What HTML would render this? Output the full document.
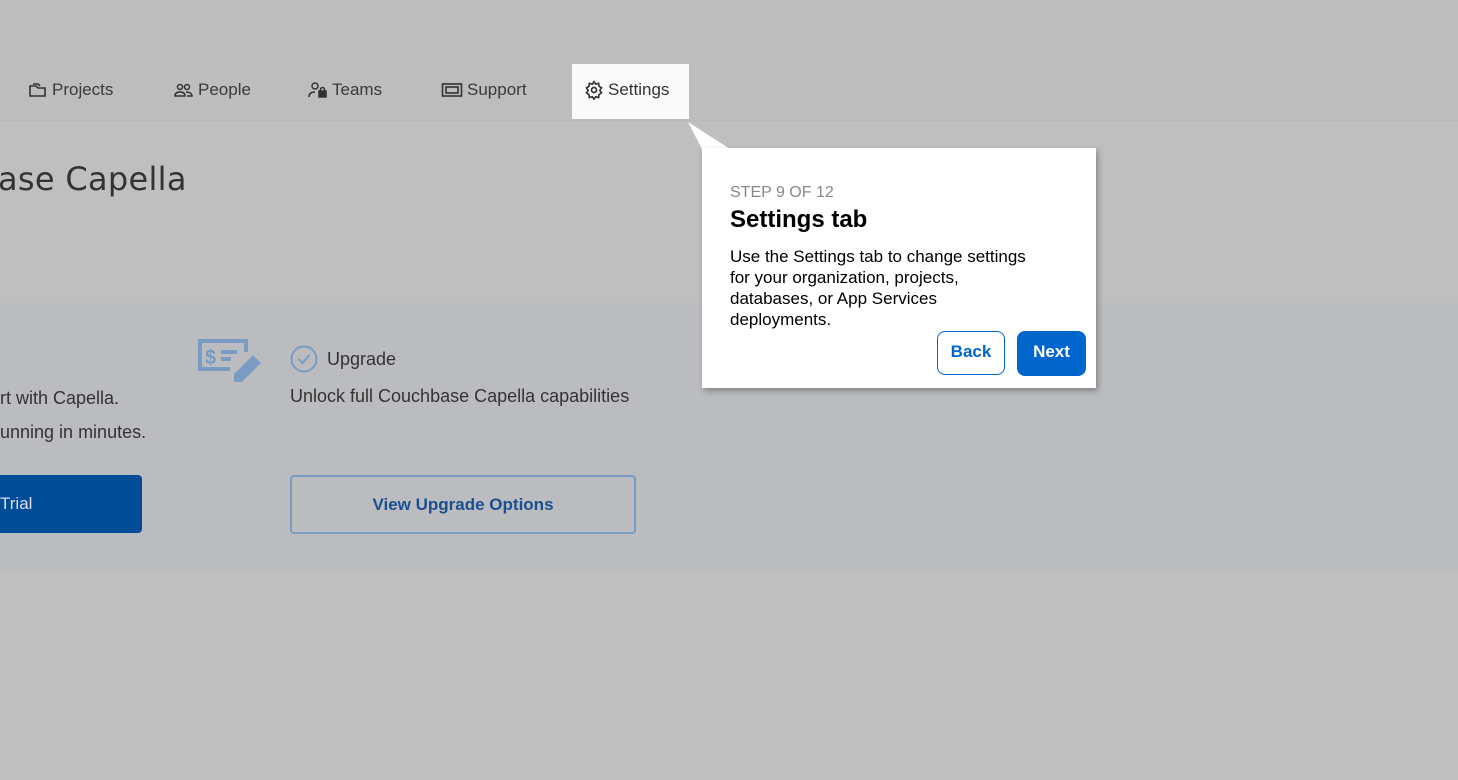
<!DOCTYPE html>
<html><head><style>
body{margin:0;width:1458px;height:780px;overflow:hidden;background:#bfbfbf;font-family:"Liberation Sans",sans-serif;position:relative}
.a{position:absolute}
.nav{top:0;left:0;width:1458px;height:120px;background:#bdbdbd;border-bottom:1px solid #b8b8b8}
.ni{top:80px;font-size:17px;color:#3a3a3a;display:flex;align-items:center;gap:4px}
.band{top:303px;left:0;width:1458px;height:267px;background:#babcbf}
.tip{left:702px;top:148px;width:394px;height:240px;background:#fff;box-shadow:2px 3px 6px rgba(0,0,0,.3)}
</style></head><body>
<div class="a nav"></div>
<div class="a" style="left:572px;top:64px;width:117px;height:55px;background:#fafafa"></div>
<div class="a ni" style="left:28px"><svg width="20" height="18" viewBox="0 0 20 18" fill="none" stroke="#333" stroke-width="1.6"><path d="M2 5h6l2 2h7v8H2z"/><path d="M5 3h5l2 2"/></svg>Projects</div>
<div class="a ni" style="left:174px"><svg width="20" height="16" viewBox="0 0 20 16" fill="none" stroke="#333" stroke-width="1.5"><circle cx="6" cy="5" r="2.5"/><circle cx="13" cy="5" r="2.5"/><path d="M1 14c0-3 2-4 5-4s5 1 5 4zM12 10c3 0 6 1 6 4h-5"/></svg>People</div>
<div class="a ni" style="left:308px"><svg width="20" height="18" viewBox="0 0 20 18" fill="none" stroke="#333" stroke-width="1.5"><circle cx="7" cy="5" r="3"/><path d="M1 16c0-4 3-5 6-5"/><rect x="11" y="10" width="7" height="6" fill="#333"/><path d="M12.5 10V8.5a2 2 0 0 1 4 0V10"/></svg>Teams</div>
<div class="a ni" style="left:441px"><svg width="22" height="16" viewBox="0 0 22 16" fill="none" stroke="#333" stroke-width="1.6"><rect x="1.5" y="2" width="19" height="12"/><rect x="5" y="5" width="12" height="6"/></svg>Support</div>
<div class="a ni" style="left:584px;color:#333"><svg width="20" height="20" viewBox="0 0 24 24" fill="none" stroke="#333" stroke-width="2"><circle cx="12" cy="12" r="3"/><path d="M12 2l2 3 3.5-1 .5 3.5 3 2-2 3 2 3-3 2-.5 3.5-3.5-1-2 3-2-3-3.5 1-.5-3.5-3-2 2-3-2-3 3-2 .5-3.5 3.5 1z"/></svg>Settings</div>
<div class="a" style="left:-2px;top:160px;font-size:32px;color:#333;font-family:'DejaVu Sans',sans-serif;letter-spacing:0.3px">ase Capella</div>
<div class="a band"></div>
<svg class="a" style="left:196px;top:337px" width="68" height="46" viewBox="0 0 68 46" fill="none" stroke="#7a9cc2" stroke-width="4"><path d="M50 15V4H4v28h30"/><text x="9" y="27" font-size="20" font-weight="bold" fill="#7a9cc2" stroke="none" font-family="Liberation Sans">$</text><path d="M25 15h16M25 22h10"/><path d="M40 38l17-17 5 5-17 17h-5z" fill="#7a9cc2"/></svg>
<svg class="a" style="left:290px;top:345px" width="28" height="28" viewBox="0 0 28 28" fill="none" stroke="#7a9cc2" stroke-width="2"><circle cx="14" cy="14" r="12.5"/><path d="M8.5 14l4 4 7-8"/></svg>
<div class="a" style="left:327px;top:349px;font-size:18px;color:#333">Upgrade</div>
<div class="a" style="left:290px;top:386px;font-size:18px;color:#333">Unlock full Couchbase Capella capabilities</div>
<div class="a" style="left:0;top:388px;font-size:18px;color:#333">rt with Capella.</div>
<div class="a" style="left:0;top:422px;font-size:18px;color:#333">unning in minutes.</div>
<div class="a" style="left:0;top:475px;width:142px;height:58px;background:#004c97;border-radius:0 4px 4px 0;color:#dde;font-size:17px;line-height:58px">Trial</div>
<div class="a" style="left:290px;top:475px;width:342px;height:55px;border:2px solid #7a9cc2;border-radius:4px;color:#1b4f8f;font-weight:bold;font-size:17px;text-align:center;line-height:55px">View Upgrade Options</div>
<svg class="a" style="left:686px;top:122px" width="44" height="30"><path d="M2 0L44 27H16z" fill="#fff"/></svg>
<div class="a tip">
<div class="a" style="left:28px;top:36px;font-size:16px;color:#888">STEP 9 OF 12</div>
<div class="a" style="left:28px;top:58px;font-size:24px;font-weight:bold;color:#000">Settings tab</div>
<div class="a" style="left:28px;top:98px;font-size:17px;line-height:21px;color:#000;white-space:nowrap">Use the Settings tab to change settings<br>for your organization, projects,<br>databases, or App Services<br>deployments.</div>
<div class="a" style="left:235px;top:183px;width:66px;height:42px;border:1.5px solid #0066cc;border-radius:8px;color:#0066cc;font-weight:bold;font-size:17px;text-align:center;line-height:40px">Back</div>
<div class="a" style="left:315px;top:183px;width:69px;height:45px;background:#0066cc;border-radius:8px;color:#fff;font-weight:bold;font-size:17px;text-align:center;line-height:42px">Next</div>
</div>
</body></html>
